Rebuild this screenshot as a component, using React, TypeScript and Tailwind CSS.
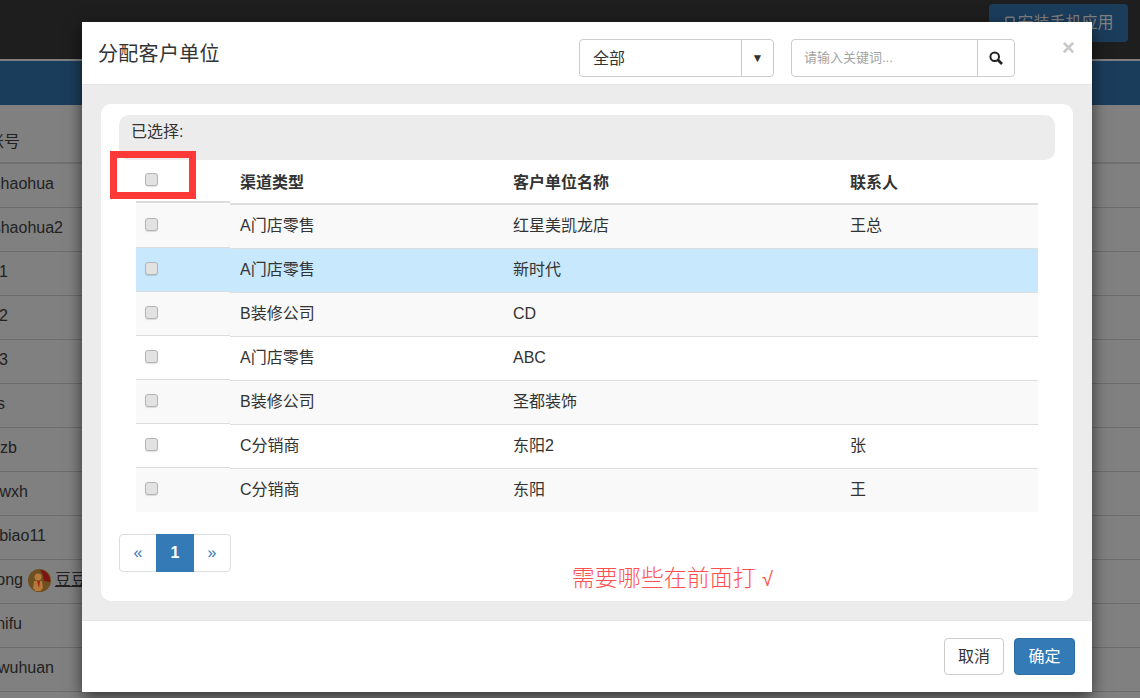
import React from "react";
import { Smartphone } from "lucide-react";

const accounts = [
  { text: "shaohua", box: "w-[54px]" },
  { text: "shaohua2", box: "w-[63px]" },
  { text: "1", box: "w-[8px]" },
  { text: "2", box: "w-[8px]" },
  { text: "3", box: "w-[8px]" },
  { text: "s", box: "w-[5px]" },
  { text: "zb", box: "w-[17px]" },
  { text: "wxh", box: "w-[28px]" },
  { text: "biao11", box: "w-[46px]" },
  { text: "ong", box: "w-[23px]", avatar: true },
  { text: "nifu", box: "w-[22px]" },
  { text: "wuhuan", box: "w-[54px]" },
];

const customers = [
  { type: "A门店零售", name: "红星美凯龙店", contact: "王总", bg: "bg-[#f9f9f9]" },
  { type: "A门店零售", name: "新时代", contact: "", bg: "bg-[#c7e8fd]" },
  { type: "B装修公司", name: "CD", contact: "", bg: "bg-[#f9f9f9]" },
  { type: "A门店零售", name: "ABC", contact: "", bg: "bg-white" },
  { type: "B装修公司", name: "圣都装饰", contact: "", bg: "bg-[#f9f9f9]" },
  { type: "C分销商", name: "东阳2", contact: "张", bg: "bg-white" },
  { type: "C分销商", name: "东阳", contact: "王", bg: "bg-[#f9f9f9]" },
];

function Checkbox() {
  return (
    <input
      type="checkbox"
      className="block h-[13px] w-[13px] appearance-none rounded-[3px] border border-[#b4b4b4] bg-[#e2e2e2] shadow-[0_1px_1px_rgba(0,0,0,0.12)]"
    />
  );
}

function Avatar() {
  return (
    <svg width="23" height="23" viewBox="0 0 23 23" className="shrink-0">
      <circle cx="11.5" cy="11.5" r="11.5" fill="#6d4f22" />
      <path d="M12 1a10.500 10.500 0 0 1 10 12l-6-1-1-6z" fill="#7c1414" />
      <circle cx="10" cy="8" r="3.500" fill="#b5793a" />
      <path d="M6 12h8l1 7-2.500 3h-5L5 19z" fill="#b5793a" />
      <path d="M9 12h3l-1 7z" fill="#a81d1d" />
    </svg>
  );
}

function SearchGlyph() {
  return (
    <svg width="14" height="14" viewBox="0 0 14 14" fill="none" stroke="#222">
      <circle cx="5.700" cy="5.700" r="4.300" strokeWidth="2" />
      <path d="M9 9l4 4" strokeWidth="2.600" />
    </svg>
  );
}

export default function App() {
  return (
    <div className="relative h-[698px] w-[1140px] overflow-hidden bg-[#808080] font-['Liberation_Sans','Noto_Sans_CJK_SC',sans-serif] text-[14px] text-[#333]">
      {/* page behind the dialog */}
      <div className="flex h-[61px] items-start justify-end border-b-2 border-[#7f7f7f] bg-[#1e1e1e] pr-[12px] pt-[4px]">
        <div className="flex h-[38px] w-[139px] items-center justify-center rounded-[4px] bg-[#1b3d5c] text-[16px] text-[#808080]">
          <Smartphone size={14} strokeWidth={2.5} />
          安装手机应用
        </div>
      </div>
      <div className="h-[44px] bg-[#1b3d5c]" />
      <div className="h-[59px] border-b-2 border-[#707070] pt-[25px]">
        <div className="flex w-[20px] justify-end whitespace-nowrap text-[16px] leading-[24px] text-[#222]">账号</div>
      </div>
      {accounts.map((a) => (
        <div key={a.text} className="flex h-[44px] items-center border-b border-[#6c6c6c] pb-[3px] text-[16px] text-[#222]">
          <div className={`flex justify-end whitespace-nowrap ${a.box}`}>{a.text}</div>
          {a.avatar && (
            <div className="ml-[5px] flex items-center gap-[4px]">
              <Avatar />
              <span className="underline">豆豆</span>
            </div>
          )}
        </div>
      ))}

      {/* dialog */}
      <div className="absolute inset-0 pl-[82px] pt-[22px]">
        <div className="flex h-[670px] w-[1010px] flex-col bg-white shadow-[0_5px_15px_rgba(0,0,0,0.6)]">
          <div className="flex h-[63px] shrink-0 items-start border-b border-[#e5e5e5] pl-[16px] pr-[15px]">
            <h4 className="mt-[18px] w-[481px] text-[20px] leading-[28px] tracking-[0.3px] text-[#333]">分配客户单位</h4>
            <div className="mt-[17px] flex h-[38px] w-[195px] items-center rounded-[4px] border border-[#ccc] pl-[13px] text-[16px] text-[#333]">
              <span className="mt-[2px] flex-1">全部</span>
              <span className="flex h-full w-[32px] items-center justify-center border-l border-[#ccc] text-[12px] text-[#333]">▼</span>
            </div>
            <div className="ml-[17px] mt-[17px] flex h-[38px] w-[224px] items-center rounded-[4px] border border-[#ccc] pl-[12px] text-[13px] text-[#a3a3a3]">
              <span className="flex-1">请输入关键词...</span>
              <span className="flex h-full w-[37px] items-center justify-center border-l border-[#ccc]">
                <SearchGlyph />
              </span>
            </div>
            <button className="ml-[47px] mt-[14px] text-[22px] font-bold leading-[24px] text-[#c8c8c8]">×</button>
          </div>

          <div className="flex-1 border-b border-[#e5e5e5] bg-[#ececec] p-[19px]">
            <div className="relative h-[497px] rounded-[10px] bg-white px-[18px] pt-[11px]">
              <div className="h-[45px] rounded-[10px] bg-[#ececec] pl-[12px] pt-[7px] text-[16px] leading-[20px]">已选择:</div>

              <div className="ml-[17px] w-[902px]">
                <div className="flex h-[45px] items-start bg-white text-[16px] font-bold">
                  <div className="h-[43px] w-[94px] shrink-0 border-b-2 border-[#ddd] pl-[9px] pt-[13px]">
                    <Checkbox />
                  </div>
                  <div className="flex h-[45px] flex-1 items-center border-b-2 border-[#ddd] pt-[2px]">
                    <div className="w-[273px] pl-[10px]">渠道类型</div>
                    <div className="w-[337px] pl-[10px]">客户单位名称</div>
                    <div className="pl-[10px]">联系人</div>
                  </div>
                </div>
                {customers.map((c, i) => (
                  <div key={i} className={`flex items-start ${i === 6 ? "h-[43px]" : "h-[44px]"} ${c.bg}`}>
                    <div className={`-mt-px h-[44px] w-[94px] shrink-0 pl-[9px] pt-[14px] ${i === 6 ? "" : "border-b border-[#ddd]"} ${c.bg}`}>
                      <Checkbox />
                    </div>
                    <div className={`flex flex-1 items-center pb-[2px] text-[16px] ${i === 6 ? "h-[43px]" : "h-[44px] border-b border-[#ddd]"}`}>
                      <div className="w-[273px] pl-[10px]">{c.type}</div>
                      <div className="w-[337px] pl-[10px]">{c.name}</div>
                      <div className="pl-[10px]">{c.contact}</div>
                    </div>
                  </div>
                ))}
              </div>

              <div className="mt-[22px] flex items-start justify-between">
                <div className="flex h-[38px] w-[112px] rounded-[4px] border border-[#ddd] text-[16px] text-[#337ab7]">
                  <span className="flex w-[36px] items-center justify-center">«</span>
                  <span className="-my-px flex w-[38px] items-center justify-center bg-[#337ab7] font-bold text-white">1</span>
                  <span className="flex flex-1 items-center justify-center">»</span>
                </div>
                <div className="mr-[282px] mt-[28px] whitespace-nowrap text-[23px] font-light leading-[32px] text-[#ff5050]">
                  需要哪些在前面打 <span className="text-[20px]">√</span>
                </div>
              </div>

              {/* red annotation around the select-all box */}
              <div className="absolute left-[9px] top-[47px] h-[48px] w-[86px] border-[7px] border-[#ff3838]" />
            </div>
          </div>

          <div className="flex h-[71px] shrink-0 items-start justify-end gap-[10px] pr-[17px] pt-[17px] text-[16px]">
            <button className="h-[37px] w-[60px] rounded-[4px] border border-[#ccc] bg-white text-[#333]">取消</button>
            <button className="h-[37px] w-[61px] rounded-[4px] border border-[#2e6da4] bg-[#337ab7] text-white">确定</button>
          </div>
        </div>
      </div>
    </div>
  );
}
